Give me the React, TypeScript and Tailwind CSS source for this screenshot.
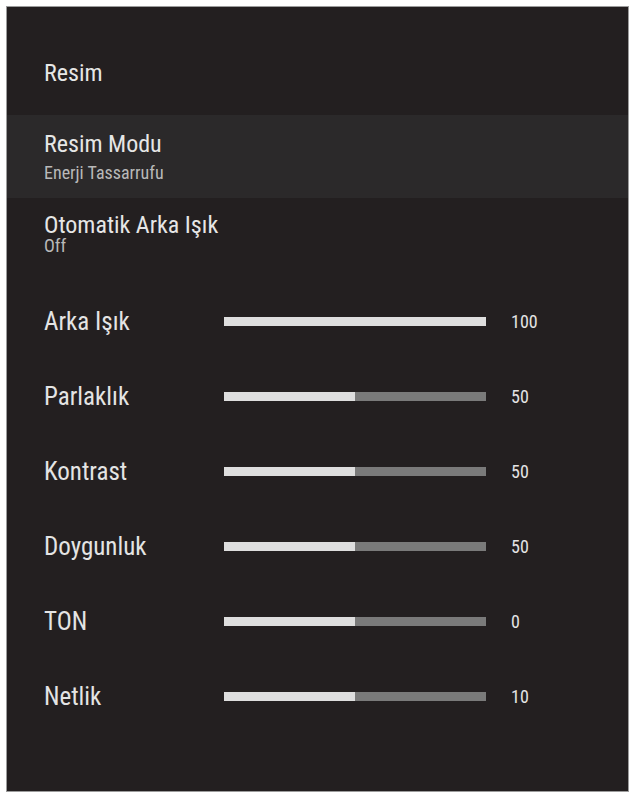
const sliders = [
  { label: "Arka Işık", value: 100, fill: 100 },
  { label: "Parlaklık", value: 50, fill: 50 },
  { label: "Kontrast", value: 50, fill: 50 },
  { label: "Doygunluk", value: 50, fill: 50 },
  { label: "TON", value: 0, fill: 50 },
  { label: "Netlik", value: 10, fill: 50 },
];

function SliderRow({ label, value, fill }: { label: string; value: number; fill: number }) {
  return (
    <div className="flex h-[75px] items-center pl-[37px]">
      <div className="w-[180px] text-[25px] leading-none text-[#e4e4e4]">{label}</div>
      <div className="flex h-[9px] w-[262px] bg-[#7a7a7a]">
        <div className="h-full bg-[#dedede]" style={{ width: `${fill}%` }} />
      </div>
      <div className="ml-[25px] text-[18px] leading-none text-[#e4e4e4]">{value}</div>
    </div>
  );
}

export default function App() {
  return (
    <div className="h-[795px] w-[631px] bg-white pb-[3px] pl-[6px] pr-[2px] pt-[6px]">
      <div className="flex h-full flex-col border border-[#9c9c9c] bg-[#231f20] font-['Roboto_Condensed','Open_Sans',Roboto,sans-serif] font-stretch-[75%]">
        <h1 className="pl-[37px] pt-[54px] text-[24px] font-normal leading-none text-[#e6e6e6]">Resim</h1>

        <div className="mt-[30px] bg-[#2b292a] pb-[16px] pl-[37px] pt-[17px]">
          <div className="text-[24px] leading-none text-[#e6e6e6]">Resim Modu</div>
          <div className="mt-[8px] text-[18px] leading-none text-[#b9b9b9]">Enerji Tassarrufu</div>
        </div>

        <div className="pb-[29px] pl-[37px] pt-[15px]">
          <div className="text-[24px] leading-none text-[#e6e6e6]">Otomatik Arka Işık</div>
          <div className="text-[18px] leading-none text-[#b9b9b9]">Off</div>
        </div>

        {sliders.map((s) => (
          <SliderRow key={s.label} {...s} />
        ))}
      </div>
    </div>
  );
}
